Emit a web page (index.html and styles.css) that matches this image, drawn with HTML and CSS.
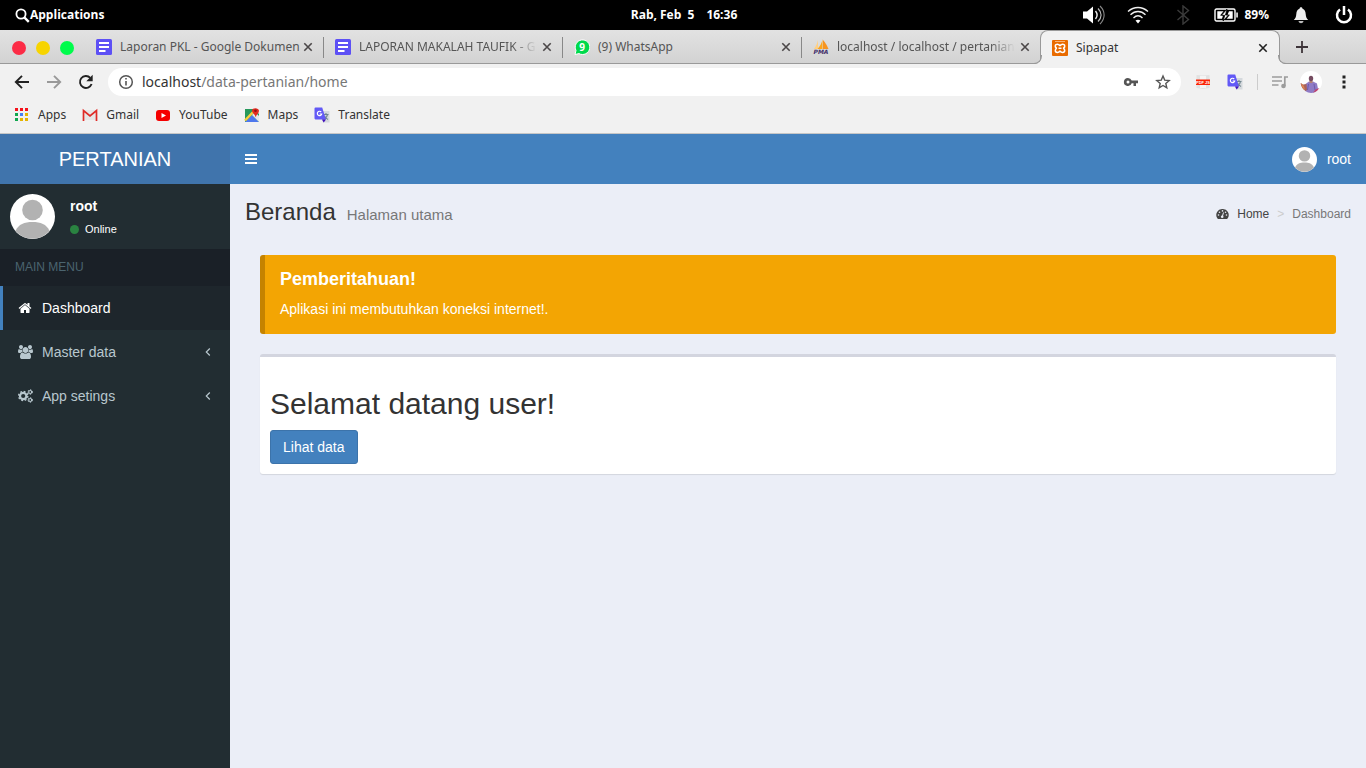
FILE: index.html
```html
<!DOCTYPE html>
<html lang="id">
<head>
<meta charset="utf-8">
<title>Sipapat</title>
<link rel="stylesheet" href="styles.css">
</head>
<body>
<svg class="defs" aria-hidden="true">
  <defs>
    <symbol id="person" viewBox="0 0 45 45"><circle cx="22.500" cy="22.500" r="22.500" fill="#fff"/><circle cx="22.500" cy="16" r="10.300" fill="#b2b2b2"/><path d="M5.500 37c3-7 9-9 17-9s14 2 17 9a22.500 22.500 0 0 1-34 0z" fill="#b2b2b2"/></symbol>
    <symbol id="doc" viewBox="0 0 16 16"><rect width="16" height="16" rx="1.500" fill="#5d50f5"/><path d="M3 4h10M3 8h10M3 12h6.500" stroke="#fff" stroke-width="2"/></symbol>
    <symbol id="close" viewBox="0 0 12 12"><path d="M2.300 2.300l7.400 7.400M9.700 2.300l-7.400 7.400" stroke="currentColor" stroke-width="1.600"/></symbol>
    <symbol id="translate" viewBox="0 0 16 16"><path d="M6 4h9.500v11.500H9z" fill="#d5d9dd"/><path d="M9.500 7.500h5M12 6v1.500M13.500 7.500c-.5 2.500-2 4-4 5M10.500 9c1 1.800 2 2.700 3.500 3.500" fill="none" stroke="#70858e" stroke-width="1.100"/><path d="M1.500.500h6.700l3.800 12H1.500A1.200 1.200 0 0 1 .5 11.300V1.500a1 1 0 0 1 1-1z" fill="#6259f6"/><path d="M8 12.500h4L9.700 15.500z" fill="#4211bd"/><path d="M7.200 5a2.200 2.200 0 1 0 .5 2H5.600" fill="none" stroke="#fff" stroke-width="1.200"/></symbol>
    <symbol id="angle" viewBox="0 0 6 10"><path d="M4.800 1.500L1.300 5l3.500 3.500" fill="none" stroke="currentColor" stroke-width="1.200"/></symbol>
  </defs>
</svg>

<header class="system">
  <button class="applications" type="button">
    <svg width="15" height="15" viewBox="0 0 15 15"><circle cx="6" cy="6" r="4.600" fill="none" stroke="#fff" stroke-width="1.800"/><path d="M9.300 9.300l4.500 4.500" stroke="#fff" stroke-width="2.400"/></svg>
    <span>Applications</span>
  </button>
  <div class="clock"><span>Rab, Feb &nbsp;5</span><time>16:36</time></div>
  <div class="indicators">
    <svg width="24" height="20" viewBox="0 0 24 20"><path d="M1 6.500h4l6-5v17l-6-5H1z" fill="#fff"/><path d="M13.500 6c2 2.500 2 5.500 0 8" fill="none" stroke="#eee" stroke-width="1.400"/><path d="M16 3.500c4 4 4 9 0 13" fill="none" stroke="#bbb" stroke-width="1.300"/><path d="M18 1c5.500 5.500 5.500 12.500 0 18" fill="none" stroke="#888" stroke-width="1.100"/></svg>
    <svg width="24" height="18" viewBox="-1 0 24 18"><path d="M1 5.500c6-5.300 14-5.300 20 0M3.500 8.700c4.500-4.300 10.500-4.300 15 0M6.500 12c2.800-2.700 6.200-2.700 9 0" fill="none" stroke="#eee" stroke-width="1.400"/><path d="M8.500 14.500q2.500-1.500 5 0L11 17.500z" fill="#fff"/></svg>
    <svg width="24" height="20" viewBox="-6 0 24 20"><path d="M1.500 5l11 9.500L7 19V1l5.500 4.500-11 9.500" fill="none" stroke="#3b3b3b" stroke-width="1.400"/></svg>
    <span class="battery">
      <svg width="24" height="14" viewBox="0 0 24 14"><rect x="1" y="1" width="20" height="12" rx="1.500" fill="none" stroke="#fff" stroke-width="1.400"/><path d="M22.300 4.500h1.500v5h-1.500zM3.300 3.300h6.200L6 7.500h3L8 10.700H3.300zM18.700 10.700h-6l3.300-4h-2.500l1.500-3.400h3.700z" fill="#fff"/><path d="M13 1L7.500 7.300h3.300L9 13l5.500-6h-3z" fill="#fff" stroke="#000" stroke-width=".8"/></svg>
      <span>89%</span>
    </span>
    <svg width="16" height="18" viewBox="0 0 16 18"><path d="M8 1.200c1 0 1.500.7 1.500 1.500 2.300.8 3 2.600 3.200 5.300.2 3 .8 4.500 2.500 6H.800c1.700-1.500 2.300-3 2.500-6 .2-2.700.9-4.500 3.200-5.300 0-.8.500-1.500 1.500-1.500z" fill="#eee"/><path d="M5.500 15h5c-.5 3-4.500 3-5 0z" fill="#bbb"/></svg>
    <svg width="18" height="20" viewBox="0 0 18 20"><path d="M5 4.500a7 7 0 1 0 8 0M9 1v9" fill="none" stroke="#fff" stroke-width="2.500"/></svg>
  </div>
</header>

<nav class="tabs" aria-label="Tab">
  <div class="lights"><button class="light red" type="button" aria-label="Tutup"></button><button class="light yellow" type="button" aria-label="Kecilkan"></button><button class="light green" type="button" aria-label="Besarkan"></button></div>
  <div class="tab"><svg width="16" height="16"><use href="#doc"/></svg><span class="label">Laporan PKL - Google Dokumen</span><button class="close" type="button" aria-label="Tutup tab"><svg width="12" height="12"><use href="#close"/></svg></button></div>
  <div class="tab"><svg width="16" height="16"><use href="#doc"/></svg><span class="label faded">LAPORAN MAKALAH TAUFIK - G</span><button class="close" type="button" aria-label="Tutup tab"><svg width="12" height="12"><use href="#close"/></svg></button></div>
  <div class="tab"><svg width="16" height="16" viewBox="0 0 16 16"><path d="M1 15.500l1-4A7.300 7.300 0 1 1 5 14.600z" fill="#00d94c" stroke="#fff"/><text x="8" y="12" text-anchor="middle" class="badge-number">9</text></svg><span class="label">(9) WhatsApp</span><button class="close" type="button" aria-label="Tutup tab"><svg width="12" height="12"><use href="#close"/></svg></button></div>
  <div class="tab"><svg width="16" height="16" viewBox="0 0 16 16"><path d="M5 1v9H.800C3 7 4 5 5 1z" fill="#ffd083"/><path d="M9.500 0v10H4.500C7 7 9 4 9.500 0z" fill="#fda51a"/><path d="M10 1c2.500 2.500 4 5.500 5.500 9H10z" fill="#f79420"/><text x="8" y="15" text-anchor="middle" class="pma">PMA</text></svg><span class="label faded">localhost / localhost / pertanian</span><button class="close" type="button" aria-label="Tutup tab"><svg width="12" height="12"><use href="#close"/></svg></button></div>
  <div class="tab active"><svg width="16" height="16" viewBox="0 0 16 16"><rect width="16" height="16" rx="1" fill="#e96b00"/><path d="M3 1.500h10" stroke="#f8b477"/><path d="M6.500 8.300h3M8 6.200C7.500 3.500 3.300 3.500 3.300 6c0 1.300.7 2.200 1.700 2.300-1 .1-1.700.9-1.700 2.200 0 2.500 4.200 2.500 4.700.2.500 2.300 4.700 2.300 4.700-.2 0-1.300-.7-2.100-1.700-2.200 1-.1 1.700-1 1.700-2.300 0-2.500-4.200-2.500-4.700.2z" fill="none" stroke="#fff" stroke-width="1.500"/></svg><span class="label">Sipapat</span><button class="close" type="button" aria-label="Tutup tab"><svg width="12" height="12"><use href="#close"/></svg></button></div>
  <button class="new-tab" type="button" aria-label="Tab baru"><svg width="12" height="12" viewBox="0 0 12 12"><path d="M6 0v12M0 6h12" stroke="#3d3439" stroke-width="1.800"/></svg></button>
</nav>

<div class="toolbar">
  <div class="history">
    <button type="button" aria-label="Kembali"><svg width="16" height="16" viewBox="0 0 16 16"><path d="M15 8H2M8 1.800L1.800 8 8 14.200" fill="none" stroke="#222" stroke-width="1.900"/></svg></button>
    <button type="button" aria-label="Maju"><svg width="16" height="16" viewBox="0 0 16 16"><path d="M1 8h13M8 1.800L14.200 8 8 14.200" fill="none" stroke="#999" stroke-width="1.900"/></svg></button>
    <button type="button" aria-label="Muat ulang"><svg width="16" height="16" viewBox="0 0 16 16"><path d="M13.600 10A6 6 0 1 1 12.300 3.800" fill="none" stroke="#222" stroke-width="1.900"/><path d="M14.700.800v6.400H8.300z" fill="#222"/></svg></button>
  </div>
  <div class="address">
    <svg width="16" height="16" viewBox="0 0 16 16"><circle cx="8" cy="8" r="6.300" fill="none" stroke="#555" stroke-width="1.500"/><path d="M8 7v4.500M8 4v1.600" stroke="#555" stroke-width="1.600"/></svg>
    <a class="url" href="#">localhost<span>/data-pertanian/home</span></a>
    <button type="button" aria-label="Sandi"><svg width="16" height="16" viewBox="0 0 16 16"><path d="M5 4a4 4 0 1 0 3.700 5.200H10.500V12H13V9.200h2V6.500H8.700A4 4 0 0 0 5 4zm0 2.500a1.500 1.500 0 1 1 0 3 1.500 1.500 0 0 1 0-3z" fill="#555" fill-rule="evenodd"/></svg></button>
    <button type="button" aria-label="Bookmark"><svg width="16" height="16" viewBox="0 0 16 16"><path d="M8 2l1.700 4.100 4.500.4-3.400 2.900 1 4.400L8 11.500l-3.800 2.300 1-4.400-3.400-2.900 4.500-.4z" fill="none" stroke="#555" stroke-width="1.400"/></svg></button>
  </div>
  <div class="extensions">
    <button type="button" aria-label="PDF"><svg width="16" height="16" viewBox="0 0 16 16"><path d="M1.500 1l6.500.500L14.500 1v13L8 15l-6.500-1z" fill="#e2e2e2"/><path d="M5 2h6v12H5z" fill="#f4f4f4"/><path d="M1 5.500h14v5.500H1z" fill="#fb2305"/><text x="8" y="10" text-anchor="middle" class="pdf">PDF JS</text></svg></button>
    <button type="button" aria-label="Terjemahkan"><svg width="16" height="16"><use href="#translate"/></svg></button>
  </div>
  <div class="profile">
    <i class="divider"></i>
    <button type="button" aria-label="Putar media"><svg width="16" height="14" viewBox="0 0 16 14"><path d="M0 2h10M0 6h10M0 10h6.500M12.800 11V2H16" fill="none" stroke="#9c9c9c" stroke-width="1.700"/><circle cx="11.500" cy="11" r="2.300" fill="#9c9c9c"/></svg></button>
    <button type="button" aria-label="Profil"><svg width="22" height="22" viewBox="0 0 22 22"><circle cx="11" cy="11" r="11" fill="#fff"/><path d="M5.500 13l3.500-2.500h4l4 2 1 5.500-2.500 3A11 11 0 0 1 5 20z" fill="#8f7bc5"/><path d="M.500 12l2.500 1.500 3.500-.5.500 6-1.500 1C3 18.500 1 16 .5 12z" fill="#a8635c"/><path d="M1 12l3 3 1 4C3 18 1.500 15.500 1 12z" fill="#db8250"/><path d="M9.500 9h3v3h-3z" fill="#b58170"/><ellipse cx="11" cy="7.500" rx="2.200" ry="2.700" fill="#754b60"/><path d="M8.500 13l-1 6M14 13l1 6" stroke="#6e5bad"/><path d="M15.500 18.500l4-1.500-2.500 3-4 1.700z" fill="#c1456e"/></svg></button>
    <button type="button" aria-label="Menu"><svg width="4" height="14" viewBox="0 0 4 14"><path d="M.500.500h3v3h-3zM.500 5.500h3v3h-3zM.500 10.500h3v3h-3z" fill="#222"/></svg></button>
  </div>
</div>

<nav class="bookmarks" aria-label="Bookmark">
  <a href="#"><svg width="16" height="16" viewBox="0 0 16 16"><path d="M1 1h3v3H1zM6 1h3v3H6zM11 1h3v3h-3z" fill="#f5121b"/><path d="M1 6h3v3H1zM1 11h3v3H1z" fill="#10a74f"/><path d="M6 6h3v3H6z" fill="#4680f4"/><path d="M11 6h3v3h-3zM6 11h3v3H6zM11 11h3v3h-3z" fill="#e5b400"/></svg>Apps</a>
  <a href="#"><svg width="16" height="16" viewBox="0 0 16 16"><path d="M1 3h14v10H1z" fill="#e6e6e6"/><path d="M1.500 14V3.500L8 9l6.500-5.500V14" fill="none" stroke="#df2a26" stroke-width="1.700"/></svg>Gmail</a>
  <a href="#"><svg width="16" height="16" viewBox="0 0 16 16"><rect x="1" y="3" width="14" height="11" rx="3" fill="#f50000"/><path d="M6.500 6v5L11 8.500z" fill="#fff"/></svg>YouTube</a>
  <a href="#"><svg width="16" height="16" viewBox="0 0 16 16"><path d="M1 2h9l5 5v8H1z" fill="#26985b"/><path d="M1 15l7-7 7 7z" fill="#4e78ed"/><path d="M1 13.500L11 3" stroke="#f9cf3b" stroke-width="2.500"/><path d="M8 8l7 7V9l-4-4z" fill="#e5e7eb"/><path d="M8 3.500C8 .300 15 .300 15 3.800c0 2.500-2.700 3.700-3.200 6.400C11.200 7.500 8 6 8 3.500z" fill="#e22b20"/><circle cx="11.500" cy="3.700" r="1.300" fill="#8c1212"/></svg>Maps</a>
  <a href="#"><svg width="16" height="16"><use href="#translate"/></svg>Translate</a>
</nav>

<div class="app">
  <aside class="sidebar">
    <a class="logo" href="#">PERTANIAN</a>
    <section class="user-panel">
      <svg width="45" height="45"><use href="#person"/></svg>
      <div><strong>root</strong><a href="#"><i class="dot"></i>Online</a></div>
    </section>
    <h2 class="menu-title">MAIN MENU</h2>
    <nav class="menu">
      <a class="current" href="#"><svg width="14" height="14" viewBox="0 0 1792 1792"><path fill="currentColor" d="M1472 992v480q0 26-19 45t-45 19h-384v-384h-256v384h-384q-26 0-45-19t-19-45v-480q0-1 .5-3t.5-3l575-474 575 474q1 2 1 6zm223-69l-62 74q-8 9-21 11h-3q-13 0-21-7l-692-577-692 577q-12 8-24 7-13-2-21-11l-62-74q-8-10-7-23.500t11-21.500l719-599q32-26 76-26t76 26l244 204v-195q0-14 9-23t23-9h192q14 0 23 9t9 23v408l219 182q10 8 11 21.500t-7 23.500z"/></svg><span>Dashboard</span></a>
      <a href="#"><svg width="15" height="14" viewBox="0 0 1920 1792"><path fill="currentColor" d="M593 896q-162 5-265 128h-134q-82 0-138-40.500t-56-118.500q0-353 124-353 6 0 43.500 21t97.500 42.500 119 21.500q67 0 133-23-5 37-5 66 0 139 81 256zm1071 637q0 120-73 189.500t-194 69.500h-874q-121 0-194-69.500t-73-189.500q0-53 3.500-103.500t14-109 26.500-108.500 43-97.500 62-81 85.500-53.500 111.500-20q10 0 43 21.500t73 48 107 48 135 21.500 135-21.500 107-48 73-48 43-21.500q61 0 111.500 20t85.500 53.500 62 81 43 97.500 26.500 108.500 14 109 3.500 103.500zm-1024-1277q0 106-75 181t-181 75-181-75-75-181 75-181 181-75 181 75 75 181zm704 384q0 159-112.500 271.500t-271.500 112.500-271.500-112.500-112.500-271.500 112.500-271.500 271.500-112.500 271.500 112.500 112.500 271.500zm576 225q0 78-56 118.500t-138 40.500h-134q-103-123-265-128 81-117 81-256 0-29-5-66 66 23 133 23 59 0 119-21.500t97.500-42.500 43.500-21q124 0 124 353zm-128-609q0 106-75 181t-181 75-181-75-75-181 75-181 181-75 181 75 75 181z"/></svg><span>Master data</span><svg width="6" height="10"><use href="#angle"/></svg></a>
      <a href="#"><svg width="15" height="14" viewBox="0 0 15 14"><g fill="none" stroke="currentColor"><circle cx="5.200" cy="7" r="3.200" stroke-width="2.200"/><circle cx="5.200" cy="7" r="4.600" stroke-width="1.400" stroke-dasharray="1.806"/><circle cx="12.200" cy="3" r="1.500" stroke-width="1.200"/><circle cx="12.200" cy="3" r="2.300" stroke-width="1" stroke-dasharray="1.200"/><circle cx="12.200" cy="11" r="1.500" stroke-width="1.200"/><circle cx="12.200" cy="11" r="2.300" stroke-width="1" stroke-dasharray="1.200"/></g></svg><span>App setings</span><svg width="6" height="10"><use href="#angle"/></svg></a>
    </nav>
  </aside>
  <div class="page">
    <header class="navbar">
      <button type="button" aria-label="Menu samping"><svg width="12" height="10" viewBox="0 0 12 10"><path d="M0 1h12M0 5h12M0 9h12" stroke="#fff" stroke-width="2"/></svg></button>
      <a href="#"><svg width="25" height="25"><use href="#person"/></svg>root</a>
    </header>
    <main>
      <div class="heading">
        <h1>Beranda<small>Halaman utama</small></h1>
        <nav class="breadcrumb">
          <a href="#"><svg width="13" height="10" viewBox="0 0 12 10"><path d="M6 0a6 6 0 0 1 5.200 9.300q-.3.700-.9.700H1.700q-.6 0-.9-.7A6 6 0 0 1 6 0z" fill="#444"/><g fill="#ebeef7"><circle cx="2" cy="6" r=".8"/><circle cx="3" cy="3.200" r=".8"/><circle cx="6" cy="1.900" r=".8"/><circle cx="9" cy="3.200" r=".8"/><circle cx="10" cy="6" r=".8"/><circle cx="5.700" cy="7.700" r="1.300"/></g><path d="M5.800 7.700L7 3.500" stroke="#ebeef7"/></svg>Home</a>
          <i>&gt;</i><span>Dashboard</span>
        </nav>
      </div>
      <div class="content">
        <section class="callout"><h4>Pemberitahuan!</h4><p>Aplikasi ini membutuhkan koneksi internet!.</p></section>
        <section class="box"><h2>Selamat datang user!</h2><button type="button">Lihat data</button></section>
      </div>
    </main>
  </div>
</div>
</body>
</html>
```
FILE: styles.css
```css
* { box-sizing: border-box; }
body {
  margin: 0;
  min-height: 100vh;
  display: flex;
  flex-direction: column;
  background: #ebeef7;
  color: #333;
  font: 14px/20px "Liberation Sans", Arial, sans-serif;
}
h1, h2, h4, p { margin: 0; font-weight: 400; }
a { color: inherit; text-decoration: none; }
button { margin: 0; padding: 0; border: 0; background: none; color: inherit; font: inherit; cursor: pointer; }
svg { display: block; flex: none; }
.defs { position: absolute; width: 0; height: 0; }

/* Desktop panel */
.system {
  display: grid;
  grid-template-columns: 1fr auto 1fr;
  align-items: center;
  height: 30px;
  padding: 0 13px 0 15px;
  background: #000;
  color: #fff;
  font: bold 12px/16px "Open Sans", "Noto Sans", sans-serif;
}
.applications { display: flex; align-items: center; justify-self: start; }
.clock { display: flex; gap: 12px; }
.indicators { display: flex; align-items: center; justify-content: flex-end; gap: 20px; }
.battery { display: flex; align-items: center; gap: 6px; margin-right: 4px; }
.indicators > svg:last-child { margin-left: 6px; }

/* Browser window */
.tabs {
  display: flex;
  height: 34px;
  background: linear-gradient(#e2e2e2, #d2d2d2);
  box-shadow: inset 0 -1px #999;
  color: #555;
  font: 12px/16px "Noto Sans", sans-serif;
}
.lights { display: flex; flex: none; align-items: center; gap: 10px; width: 85px; padding: 2px 0 0 12px; }
.light { width: 14px; height: 14px; border-radius: 50%; }
.red { background: #fc2c46; }
.yellow { background: #f7d400; }
.green { background: #00fc4c; }
.tab {
  position: relative;
  display: flex;
  align-items: center;
  gap: 8px;
  flex: 0 1 239px;
  min-width: 0;
  padding: 0 10px 0 11px;
}
.tab:not(.active)::after { content: ""; position: absolute; right: 0; top: 7px; width: 1px; height: 21px; background: #888; }
.tab:nth-child(5)::after { display: none; }
.label { flex: 1; min-width: 0; white-space: nowrap; }
.faded { -webkit-mask-image: linear-gradient(to right, #000 86%, transparent); mask-image: linear-gradient(to right, #000 86%, transparent); }
.close { display: flex; margin-left: -4px; color: #4b4748; }
.active { flex-basis: 240px; margin-left: -1px; background: #f1f1f1; border: 1px solid #999; border-bottom: 0; border-radius: 8px 8px 0 0; color: #333; }
.active::before, .active::after {
  content: "";
  position: absolute;
  bottom: 0;
  width: 8px;
  height: 8px;
  border-bottom: 1px solid #999;
}
.active::before { left: -8px; border-right: 1px solid #999; border-radius: 0 0 8px 0; box-shadow: 3px 3px #f1f1f1; clip-path: inset(0 -3px -3px 0); }
.active::after { right: -8px; border-left: 1px solid #999; border-radius: 0 0 0 8px; box-shadow: -3px 3px #f1f1f1; clip-path: inset(0 0 -3px -3px); }
.active .close { color: #222; }
.new-tab { display: flex; align-items: center; padding: 0 16px; }
.badge-number { font: bold 10px "Noto Sans", sans-serif; fill: #fff; }
.pma { font: italic bold 6px "DejaVu Sans", sans-serif; fill: #422e69; }
.pdf { font: bold 4px "Liberation Sans", sans-serif; fill: #fff; }

.toolbar { display: flex; align-items: center; height: 36px; padding: 0 20px 0 14px; background: #f1f1f1; }
.history { display: flex; gap: 16px; margin-right: 14px; }
.address { display: flex; flex: 1; align-items: center; gap: 16px; height: 28px; padding: 0 10px; border-radius: 14px; background: #fff; }
.url { flex: 1; margin-left: -8px; color: #333; font: 14px/20px "Noto Sans", sans-serif; }
.url span { color: #777; }
.extensions { display: flex; gap: 16px; margin: 0 14px; }
.profile { display: flex; align-items: center; gap: 12px; }
.divider { width: 1px; height: 16px; margin-right: 2px; background: #ccc; }
.profile button:last-child { margin-left: 8px; }
.bookmarks {
  display: flex;
  align-items: center;
  gap: 16px;
  height: 34px;
  padding: 0 14px 4px;
  background: #f1f1f1;
  border-bottom: 1px solid #c6c6c6;
  color: #333;
  font: 12px/16px "Noto Sans", sans-serif;
}
.bookmarks a { display: flex; align-items: center; gap: 8px; }

/* Admin application */
.app { display: flex; flex: 1; }
.sidebar { flex: 0 0 230px; background: #222d32; color: #b8c7ce; }
.logo { display: block; background: #4074ac; color: #fff; font-size: 20px; line-height: 50px; text-align: center; }
.user-panel { display: flex; gap: 15px; padding: 10px; color: #fff; }
.user-panel strong { display: block; margin: 2px 0 3px; }
.user-panel a { display: flex; align-items: center; gap: 6px; font-size: 11px; }
.dot { width: 9px; height: 9px; border-radius: 50%; background: #2a8341; }
.menu-title { padding: 10px 15px; background: #1a2027; color: #4b646f; font-size: 12px; line-height: 17px; }
.menu a { display: flex; align-items: center; height: 44px; padding: 0 19px 0 15px; border-left: 3px solid transparent; }
.menu span { flex: 1; margin-left: 9px; }
.menu a.current { border-color: #4381be; background: #1e262c; color: #fff; }
.menu .current span { margin-left: 10px; }
.page { flex: 1; min-width: 0; }
.navbar { display: flex; align-items: center; justify-content: space-between; height: 50px; padding: 0 15px; background: #4381be; color: #fff; }
.navbar a { display: flex; align-items: center; gap: 10px; }
.heading { display: flex; align-items: center; justify-content: space-between; padding: 15px 15px 0; }
.heading h1 { font-size: 24px; line-height: 26px; }
.heading small { margin-left: 11px; color: #777; font-size: 15px; line-height: 15px; }
.breadcrumb { display: flex; align-items: center; gap: 8px; padding-top: 4px; color: #777; font-size: 12px; }
.breadcrumb a { display: flex; align-items: center; gap: 8px; color: #444; }
.breadcrumb i { color: #ccc; font-style: normal; }
.content { padding: 30px; }
.callout { margin-bottom: 20px; padding: 15px; border-left: 5px solid #c58300; border-radius: 3px; background: #f3a503; color: #fff; }
.callout h4 { margin-bottom: 10px; font-size: 18px; font-weight: 700; line-height: 19px; }
.box { padding: 30px 10px 10px; border-top: 3px solid #d3d5df; border-radius: 3px; background: #fff; box-shadow: 0 1px 1px rgba(0, 0, 0, .1); }
.box h2 { margin-bottom: 10px; font-size: 30px; line-height: 33px; }
.box button { height: 34px; padding: 0 12px; border: 1px solid #3c73aa; border-radius: 3px; background: #4381be; color: #fff; }
```
